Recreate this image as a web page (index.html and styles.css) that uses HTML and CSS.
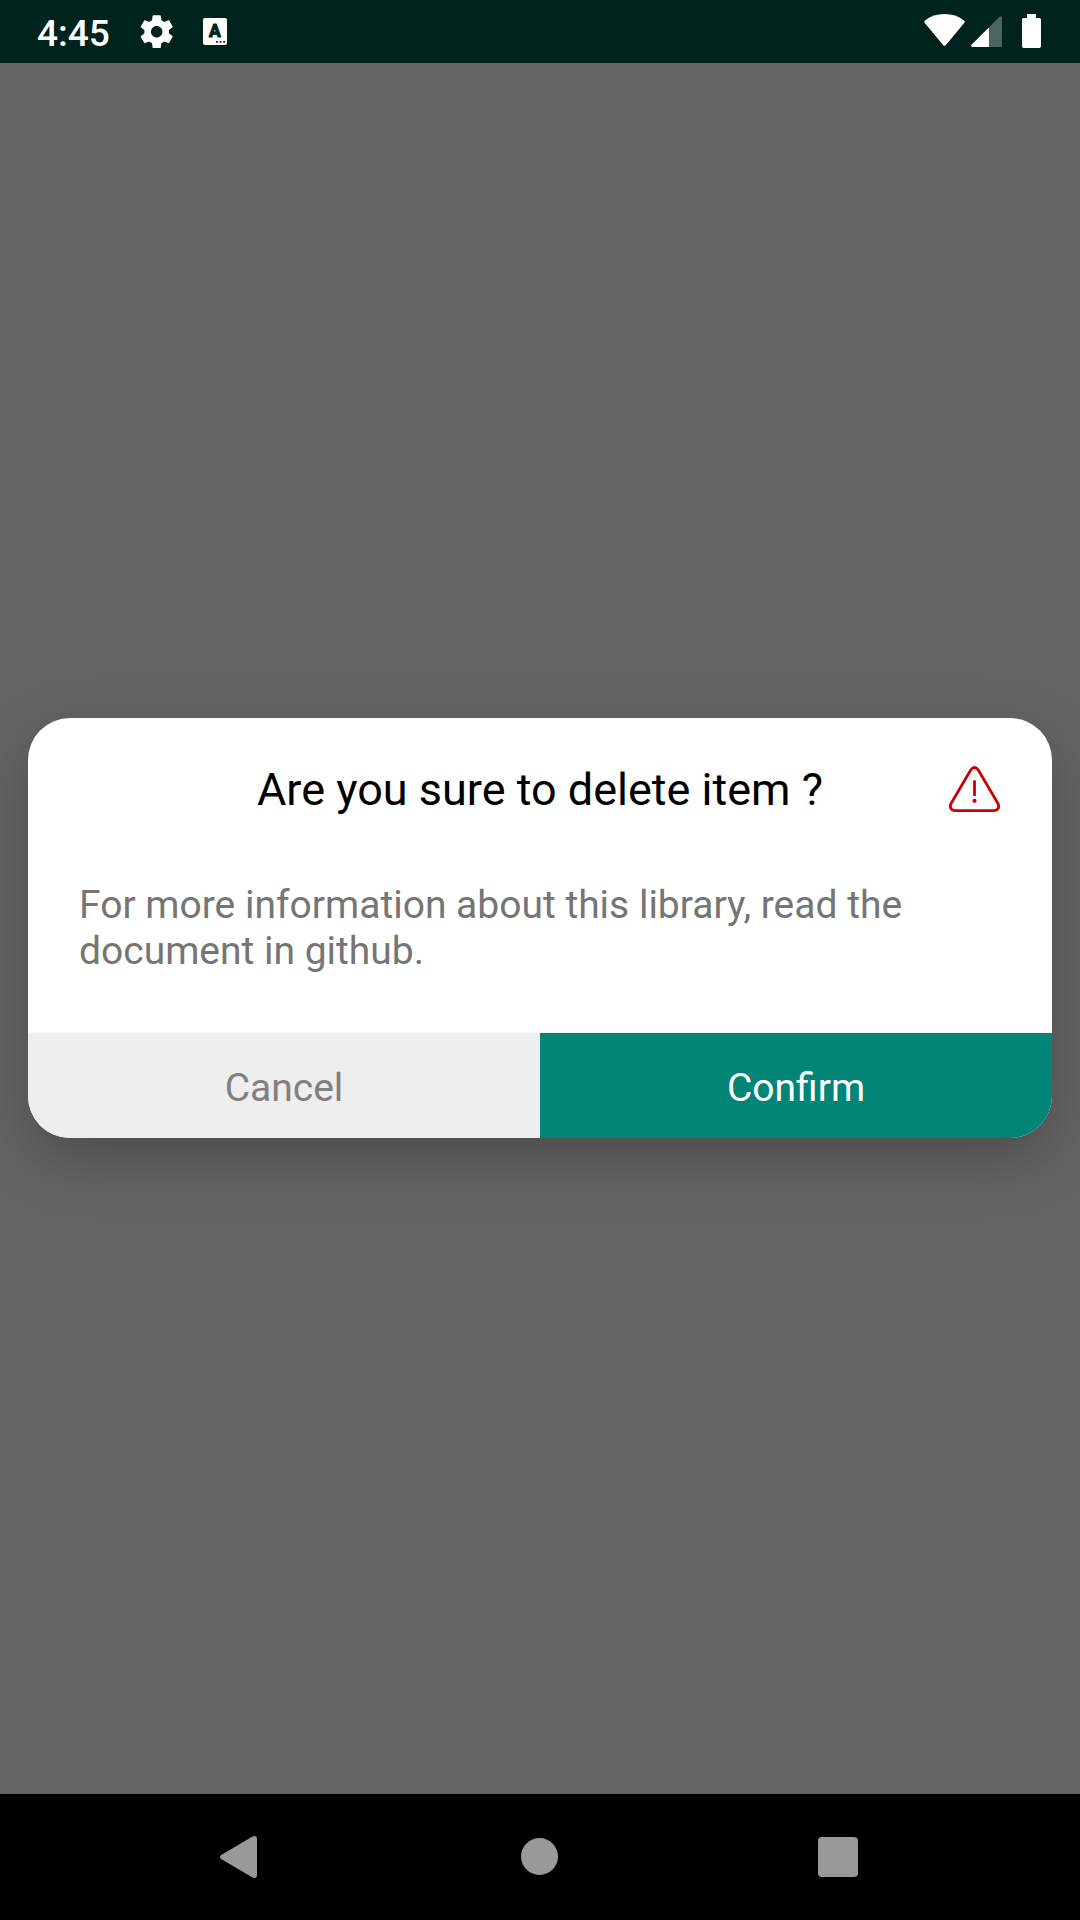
FILE: index.html
```html
<!DOCTYPE html>
<html lang="en">
<head>
<meta charset="utf-8">
<title>Confirm dialog</title>
<link rel="stylesheet" href="styles.css">
</head>
<body>
<div class="screen">
  <header class="status-bar">
    <span class="clock">4:45</span>
    <svg class="icon-gear" viewBox="0 0 24 24"><path d="M19.43 12.98c.04-.32.07-.64.07-.98s-.03-.66-.07-.98l2.11-1.65c.19-.15.24-.42.12-.64l-2-3.46c-.12-.22-.39-.3-.61-.22l-2.49 1c-.52-.4-1.08-.73-1.69-.98l-.38-2.65C14.46 2.18 14.25 2 14 2h-4c-.25 0-.46.18-.49.42l-.38 2.65c-.61.25-1.17.59-1.69.98l-2.49-1c-.23-.09-.49 0-.61.22l-2 3.46c-.13.22-.07.49.12.64l2.11 1.65c-.04.32-.07.65-.07.98s.03.66.07.98l-2.11 1.65c-.19.15-.24.42-.12.64l2 3.46c.12.22.39.3.61.22l2.49-1c.52.4 1.08.73 1.69.98l.38 2.65c.03.24.24.42.49.42h4c.25 0 .46-.18.49-.42l.38-2.65c.61-.25 1.17-.59 1.69-.98l2.49 1c.23.09.49 0 .61-.22l2-3.46c.12-.22.07-.49-.12-.64l-2.11-1.65zM12 15.5c-1.93 0-3.5-1.57-3.5-3.5s1.57-3.5 3.5-3.5 3.5 1.57 3.5 3.5-1.57 3.5-3.5 3.5z"/></svg>
    <svg class="icon-input" viewBox="0 0 24 27">
      <rect width="24" height="27" rx="2"/>
      <text class="input-letter" x="11.9" y="18.9" text-anchor="middle">A</text>
      <path class="input-dots" d="M13 23h1.800v1.800h-1.800zM16.600 23h1.800v1.800h-1.800zM20.200 23h1.800v1.800h-1.800z"/>
    </svg>
    <div class="indicators">
      <svg class="icon-wifi" viewBox="0 0 41 32"><path d="M.6 8.8Q-.3 7.4 1 6.4Q9.500 0 20.500 0Q31.500 0 40 6.400Q41.300 7.400 40.400 8.800L21.700 31.200Q20.500 32.300 19.300 31.200Z"/></svg>
      <svg class="icon-signal" viewBox="0 0 31 31"><path class="signal-empty" d="M18 11.200L28.500.700Q31-.7 31 2V29.500Q31 31 29.500 31H18Z"/><path d="M18 11.200V31H1.500Q-.6 30.500.4 28.800Z"/></svg>
      <svg class="icon-battery" viewBox="0 0 19 34"><path d="M5 0H14V4H17.500Q19 4 19 5.500V32.300Q19 34 17.300 34H1.700Q0 34 0 32.300V5.500Q0 4 1.500 4H5Z"/></svg>
    </div>
  </header>

  <main class="scrim">
    <section class="dialog" role="alertdialog">
      <div class="dialog-head">
        <h1 class="dialog-title">Are you sure to delete item ?</h1>
        <svg class="icon-warning" viewBox="0 0 52 48"><path d="M21.700 5Q25.500 0 29.300 5L49 38.500Q51.300 45 45 45.600H6Q-.3 45 2 38.500Z"/><path d="M25.500 15.300V31"/><circle cx="25.500" cy="35.800" r="2.100"/></svg>
      </div>
      <p class="dialog-text">For more information about this library, read the document in github.</p>
      <div class="dialog-actions">
        <button class="action cancel">Cancel</button>
        <button class="action confirm">Confirm</button>
      </div>
    </section>
  </main>

  <nav class="nav-bar">
    <svg class="nav-back" viewBox="0 0 37 42"><path d="M1.200 19L32.500.500Q37-1.200 37 3V39Q37 43.200 32.500 41.500L1.200 23Q-1.200 21 1.200 19Z"/></svg>
    <span class="nav-home"></span>
    <span class="nav-recent"></span>
  </nav>
</div>
</body>
</html>
```
FILE: styles.css
```css
* {
  box-sizing: border-box;
}

body {
  margin: 0;
  font-family: Roboto, sans-serif;
}

svg {
  display: block;
  flex: none;
  fill: #fff;
}

.screen {
  display: flex;
  flex-direction: column;
  width: 1080px;
  height: 1920px;
  overflow: hidden;
  background: #646464;
}

.status-bar {
  display: flex;
  align-items: flex-start;
  height: 63px;
  padding-left: 37px;
  padding-right: 39px;
  background: #00231e;
  color: #fff;
}

.clock {
  width: 100px;
  padding-top: 12px;
  font-size: 37px;
  font-weight: 500;
  line-height: 43px;
}

.icon-gear {
  width: 39.4px;
  height: 39.4px;
  margin-top: 12px;
}

.icon-input {
  width: 24px;
  height: 27px;
  margin: 18px 0 0 26.6px;
}

.input-letter {
  font-size: 17.5px;
  font-weight: 700;
  fill: #00231e;
  stroke: #00231e;
  stroke-width: 1.1;
  stroke-linejoin: round;
}

.input-dots {
  fill: #00231e;
}

.indicators {
  display: flex;
  margin-left: auto;
}

.icon-wifi {
  width: 41px;
  height: 32px;
  margin-top: 14px;
}

.icon-signal {
  width: 31px;
  height: 31px;
  margin: 16px 0 0 6px;
}

.signal-empty {
  fill: #4d6561;
}

.icon-battery {
  width: 19px;
  height: 34px;
  margin: 14px 0 0 20px;
}

.scrim {
  flex: 1;
  padding: 655px 28px 0;
}

.dialog {
  height: 420px;
  display: flex;
  flex-direction: column;
  overflow: hidden;
  border-radius: 42px;
  background: #fff;
  box-shadow: 0 20px 60px rgba(0, 0, 0, 0.24);
}

.dialog-head {
  display: grid;
  grid-template-columns: 52px 1fr 52px;
  padding: 46px 51.5px 0;
}

.dialog-title {
  grid-column: 2;
  margin: 0;
  font-size: 45px;
  font-weight: 400;
  line-height: 52px;
  text-align: center;
  white-space: nowrap;
  color: #000;
}

.icon-warning {
  width: 52px;
  height: 48px;
  margin-top: 1px;
  fill: none;
  stroke: #c00;
  stroke-width: 2.8;
}

.icon-warning circle {
  fill: #c00;
  stroke: none;
}

.dialog-text {
  margin: 66px 51px 0;
  font-size: 39px;
  line-height: 46px;
  color: #757575;
}

.dialog-actions {
  display: flex;
  height: 106px;
  margin-top: auto;
  border-top: 1px solid #f6f6f6;
}

.action {
  flex: 1;
  padding: 5px 0 0;
  border: 0;
  font: 400 39px/46px Roboto, sans-serif;
}

.cancel {
  background: #eee;
  color: #808080;
}

.confirm {
  background: #008577;
  color: #fff;
}

.nav-bar {
  display: flex;
  align-items: center;
  height: 126px;
  padding-left: 220px;
  background: #000;
}

.nav-back {
  width: 37px;
  height: 42px;
  fill: #999;
}

.nav-home {
  width: 37px;
  height: 37px;
  margin: 0 260px 1px 264px;
  border-radius: 50%;
  background: #999;
}

.nav-recent {
  width: 40px;
  height: 40px;
  border-radius: 4px;
  background: #999;
}
```
